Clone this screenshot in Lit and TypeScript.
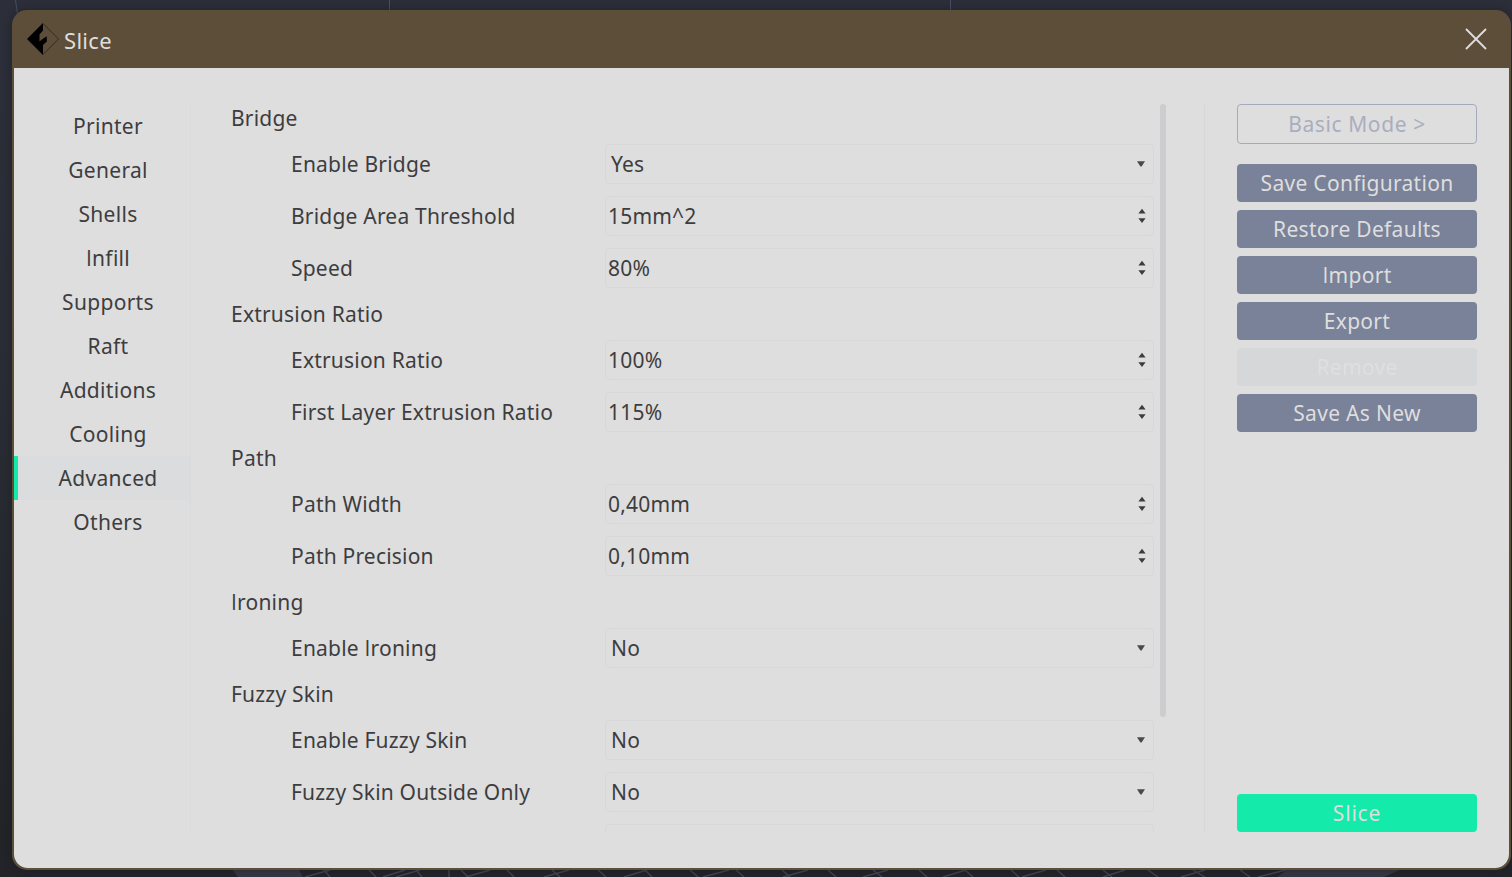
import { LitElement, html, svg, css } from "lit";
import { customElement, property, state } from "lit/decorators.js";

type Field = { label: string; value: string; kind: "select" | "spin" };
type Group = { title: string; fields: Field[] };

const TABS = ["Printer", "General", "Shells", "Infill", "Supports", "Raft", "Additions", "Cooling", "Advanced", "Others"];

const GROUPS: Group[] = [
  {
    title: "Bridge",
    fields: [
      { label: "Enable Bridge", value: "Yes", kind: "select" },
      { label: "Bridge Area Threshold", value: "15mm^2", kind: "spin" },
      { label: "Speed", value: "80%", kind: "spin" },
    ],
  },
  {
    title: "Extrusion Ratio",
    fields: [
      { label: "Extrusion Ratio", value: "100%", kind: "spin" },
      { label: "First Layer Extrusion Ratio", value: "115%", kind: "spin" },
    ],
  },
  {
    title: "Path",
    fields: [
      { label: "Path Width", value: "0,40mm", kind: "spin" },
      { label: "Path Precision", value: "0,10mm", kind: "spin" },
    ],
  },
  { title: "Ironing", fields: [{ label: "Enable Ironing", value: "No", kind: "select" }] },
  {
    title: "Fuzzy Skin",
    fields: [
      { label: "Enable Fuzzy Skin", value: "No", kind: "select" },
      { label: "Fuzzy Skin Outside Only", value: "No", kind: "select" },
      { label: "", value: "", kind: "spin" },
    ],
  },
];

const label = (text: string) =>
  text.split(/(I)/).filter(Boolean).map((s) => (s === "I" ? html`<span class="bar">I</span>` : s));

const labelStyles = css`
  .bar {
    font-family: "Open Sans", sans-serif;
  }
`;

// Perspective grid of the build plate, seen below the dialog.
const GRID: number[][] = [
  [330, 305], [324, 330], [369, 376], [405, 383], [416, 422], [420, 396], [449, 449], [461, 468], [490, 466],
  [507, 514], [552, 560], [569, 544], [598, 606], [647, 624], [645, 652], [690, 698], [729, 703], [736, 744],
  [782, 790], [808, 783], [828, 836], [873, 882], [888, 863], [919, 927], [966, 943], [965, 973], [1011, 1019],
  [1046, 1022], [1057, 1065], [1103, 1112], [1125, 1103], [1148, 1158], [1205, 1181], [1193, 1205], [1240, 1250],
  [1286, 1258],
];

@customElement("build-plate")
class BuildPlate extends LitElement {
  static styles = css`
    :host {
      display: block;
      background: linear-gradient(#2c2e39 0, #2a2d36 40%, #222428 94%, #23242a 100%);
    }
    svg {
      display: block;
    }
  `;
  render() {
    return html`<svg width="1512" height="877" viewBox="0 0 1512 877" fill="none">
      <path d="M15.500 0L17.500 14M389.500 0V12M950.500 0V12" stroke="#4a4e63" />
      <path d="M231 868H298L303 877H238ZM1290 868H1404L1384 877H1277Z" fill="#363745" />
      ${GRID.map(([a, b]) => svg`<path d="M${a} 870L${b} 877" stroke="#434658" stroke-width="1.4"/>`)}
    </svg>`;
  }
}

@customElement("setting-field")
class SettingField extends LitElement {
  static styles = [
    labelStyles,
    css`
      :host {
        display: grid;
        grid-template-columns: 374px 549px;
        height: 40px;
        align-items: center;
      }
      .name {
        padding-left: 60px;
        white-space: nowrap;
      }
      .box {
        box-sizing: border-box;
        height: 40px;
        border: 1px solid #d6d7d9;
        border-radius: 4px;
        display: flex;
        align-items: center;
        justify-content: space-between;
        padding: 0 7px 0 2px;
      }
      .box.select {
        padding-left: 5px;
        padding-right: 8px;
      }
      svg {
        display: block;
      }
    `,
  ];
  @property({ attribute: false }) field!: Field;
  render() {
    const f = this.field;
    const icon =
      f.kind === "select"
        ? html`<svg width="8" height="8" viewBox="0 0 8 8"><path d="M0 1.200H8L4.600 6.500H3.400Z" fill="#4a4a4a" /></svg>`
        : html`<svg width="8" height="16" viewBox="0 0 8 16">
            <path d="M4 .8L7.600 5.400H.4ZM4 15L.4 10.200H7.600Z" fill="#3c3c3c" />
          </svg>`;
    return html`<div class="name">${label(f.label)}</div>
      <div class="box ${f.kind}"><span>${f.value}</span>${icon}</div>`;
  }
}

@customElement("app-root")
class AppRoot extends LitElement {
  static styles = [
    labelStyles,
    css`
      :host {
        display: grid;
        grid-template: 877px / 1512px;
        width: 1512px;
        height: 877px;
        overflow: hidden;
        font: 21px/28px "Noto Sans", "Open Sans", sans-serif;
        letter-spacing: 0.3px;
        color: #3d3d3f;
      }
      build-plate,
      .dialog {
        grid-area: 1 / 1;
      }
      .dialog {
        z-index: 1;
        box-sizing: border-box;
        margin: 10px 1px 7px 12px;
        padding: 0 2px 2px;
        border-radius: 15px;
        background: #5d4e39;
        box-shadow: 0 0 8px rgba(20, 22, 26, 0.45);
        display: flex;
        flex-direction: column;
      }
      header {
        height: 58px;
        flex: none;
        display: flex;
        align-items: center;
        padding: 0 22px 0 12px;
      }
      h1 {
        flex: 1;
        margin: 1px 0 0 5px;
        font: 22px/30px "Noto Sans", sans-serif;
        letter-spacing: 0.3px;
        color: #dedede;
      }
      .body {
        flex: 1;
        min-height: 0;
        box-sizing: border-box;
        background: #dedede;
        border-radius: 0 0 14px 14px;
        padding: 36px 32px 36px 0;
        display: flex;
      }
      nav {
        width: 176px;
        border-right: 1px solid #d9dadb;
      }
      .tab {
        height: 44px;
        line-height: 44px;
        box-sizing: border-box;
        padding-left: 12px;
        text-align: center;
      }
      .tab.active {
        padding-left: 8px;
        border-left: 4px solid #14ebab;
        background: #dadcde;
      }
      .settings {
        box-sizing: border-box;
        width: 963px;
        padding-left: 40px;
        display: flex;
        flex-direction: column;
        gap: 12px;
        overflow: hidden;
        letter-spacing: 0.2px;
      }
      .group {
        display: flex;
        flex-direction: column;
        gap: 12px;
        flex: none;
      }
      h2 {
        margin: 0;
        font: inherit;
        height: 28px;
      }
      .track {
        width: 51px;
        box-sizing: border-box;
        padding-left: 6px;
        border-right: 1px solid #d7d7d8;
      }
      .thumb {
        width: 6px;
        height: 613px;
        border-radius: 3px;
        background: #cdcdcf;
      }
      aside {
        flex: 1;
        padding-left: 32px;
        display: flex;
        flex-direction: column;
        gap: 8px;
      }
      button {
        display: block;
        height: 38px;
        flex: none;
        border: 0;
        border-radius: 4px;
        padding: 0;
        font: inherit;
        letter-spacing: inherit;
        line-height: 38px;
        background: #7a8299;
        color: #dedede;
      }
      .mode {
        box-sizing: border-box;
        height: 40px;
        margin-bottom: 12px;
        border: 1px solid #a5abbd;
        background: none;
        color: #a9aebf;
        letter-spacing: 0.6px;
      }
      .off {
        background: #d5d7d9;
        color: #dfdfdf;
      }
      .go {
        margin-top: auto;
        background: #14ebab;
        letter-spacing: 0.8px;
      }
    `,
  ];

  @state() private tab = "Advanced";

  render() {
    return html`
      <build-plate></build-plate>
      <section class="dialog">
        <header>
          <svg width="33" height="34" viewBox="26 22 33 34">
            <path d="M43 23.500L58.500 39L43 54.500" fill="none" stroke="#35291e" stroke-width="1" />
            <path
              d="M43 23V30.500L39.500 34.500V41.500L41.500 39.800L46.800 36.200V41.500L43 45V55L27 39Z"
              fill="#000"
            />
          </svg>
          <h1>Slice</h1>
          <svg width="22" height="22" viewBox="0 0 22 22">
            <path d="M1 1L21 21M21 1L1 21" stroke="#dedede" stroke-width="1.800" />
          </svg>
        </header>
        <div class="body">
          <nav>
            ${TABS.map(
              (t) => html`<div class="tab ${t === this.tab ? "active" : ""}" @click=${() => (this.tab = t)}>${label(t)}</div>`
            )}
          </nav>
          <div class="settings">
            ${GROUPS.map(
              (g) => html`<div class="group">
                <h2>${label(g.title)}</h2>
                ${g.fields.map((f) => html`<setting-field .field=${f}></setting-field>`)}
              </div>`
            )}
          </div>
          <div class="track"><div class="thumb"></div></div>
          <aside>
            <button class="mode">Basic Mode &gt;</button>
            <button>Save Configuration</button>
            <button>Restore Defaults</button>
            <button>${label("Import")}</button>
            <button>Export</button>
            <button class="off">Remove</button>
            <button>Save As New</button>
            <button class="go">Slice</button>
          </aside>
        </div>
      </section>
    `;
  }
}
